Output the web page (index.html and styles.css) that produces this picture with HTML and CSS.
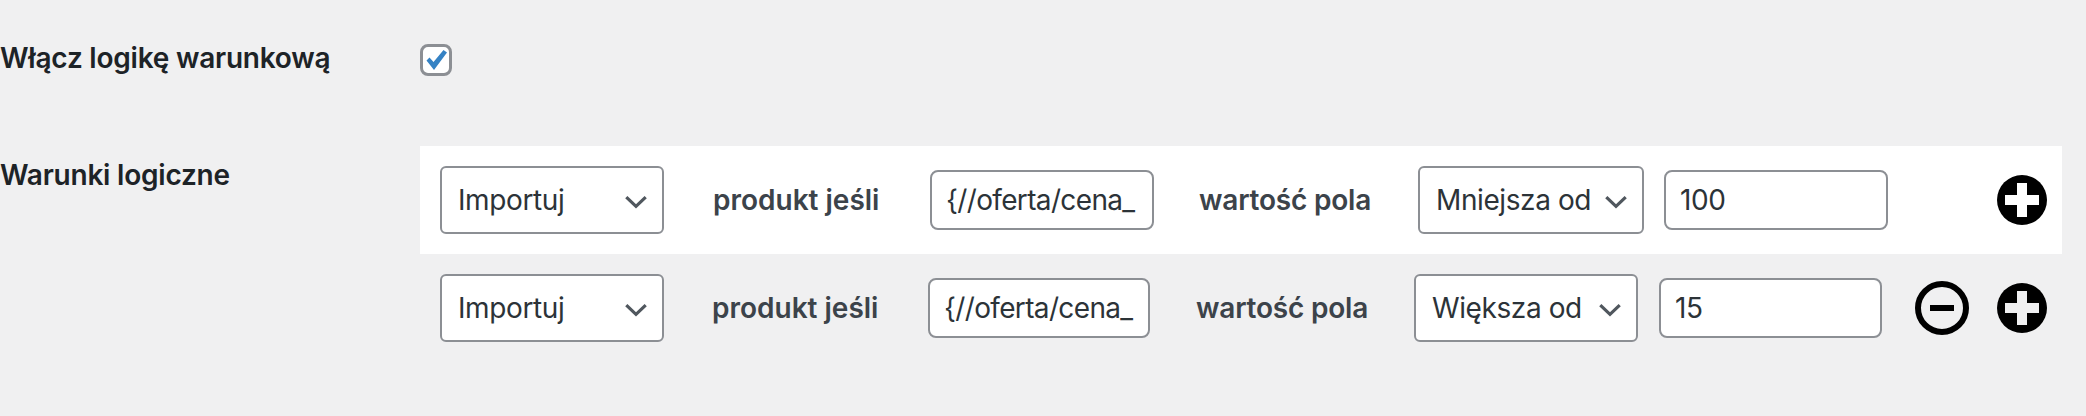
FILE: index.html
```html
<!DOCTYPE html>
<html lang="pl">
<head>
<meta charset="utf-8">
<title>Warunki logiczne</title>
<link rel="stylesheet" href="styles.css">
</head>
<body>
<div class="setting setting-enable">
  <div class="setting-label">Włącz logikę warunkową</div>
  <div class="checkbox">
    <svg viewBox="0 0 32 32" width="32" height="32"><path d="M6.5 16.5 L9.5 13.5 L13.5 18 L23.5 6 L27 8.5 L14 26 Z" fill="#3582c4"/></svg>
  </div>
</div>
<div class="setting">
  <div class="setting-label">Warunki logiczne</div>
  <div class="rules">
    <div class="rule rule-first">
      <div class="select select-action"><select><option>Importuj</option></select><svg class="chevron" viewBox="0 0 22 13"><path d="M2 2 L11 10.5 L20 2" fill="none" stroke="#50575e" stroke-width="3"/></svg></div>
      <span class="word word-product">produkt jeśli</span>
      <input class="field field-path" type="text" value="{//oferta/cena_">
      <span class="word word-value">wartość pola</span>
      <div class="select select-op"><select><option>Mniejsza od</option></select><svg class="chevron" viewBox="0 0 22 13"><path d="M2 2 L11 10.5 L20 2" fill="none" stroke="#50575e" stroke-width="3"/></svg></div>
      <input class="field field-num" type="text" value="100">
      <div class="actions">
        <svg class="plus" viewBox="0 0 50 50"><circle cx="25" cy="25" r="25"/><path d="M20 8 H30 V20 H42 V30 H30 V42 H20 V30 H8 V20 H20 Z" fill="#fff"/></svg>
      </div>
    </div>
    <div class="rule rule-second">
      <div class="select select-action"><select><option>Importuj</option></select><svg class="chevron" viewBox="0 0 22 13"><path d="M2 2 L11 10.5 L20 2" fill="none" stroke="#50575e" stroke-width="3"/></svg></div>
      <span class="word word-product">produkt jeśli</span>
      <input class="field field-path" type="text" value="{//oferta/cena_">
      <span class="word word-value">wartość pola</span>
      <div class="select select-op"><select><option>Większa od</option></select><svg class="chevron" viewBox="0 0 22 13"><path d="M2 2 L11 10.5 L20 2" fill="none" stroke="#50575e" stroke-width="3"/></svg></div>
      <input class="field field-num" type="text" value="15">
      <div class="actions">
        <svg class="minus" viewBox="0 0 54 54"><circle cx="27" cy="27" r="24" fill="none" stroke="#000" stroke-width="6"/><rect x="15" y="24" width="24" height="6"/></svg>
        <svg class="plus" viewBox="0 0 50 50"><circle cx="25" cy="25" r="25"/><path d="M20 8 H30 V20 H42 V30 H30 V42 H20 V30 H8 V20 H20 Z" fill="#f0f0f1"/></svg>
      </div>
    </div>
  </div>
</div>
</body>
</html>
```
FILE: styles.css
```css
* { box-sizing: border-box; }
html, body { margin: 0; }
body {
  width: 2086px;
  height: 416px;
  overflow: hidden;
  background: #f0f0f1;
  color: #1d2327;
  font-family: Inter, "Liberation Sans", sans-serif;
  font-size: 28px;
}
.setting { display: flex; align-items: flex-start; }
.setting-enable { padding-top: 44px; height: 146px; }
.setting-label {
  width: 420px;
  flex: none;
  font-weight: 600;
  line-height: 34px;
  letter-spacing: -0.22px;
}
.rules { width: 1642px; }
.setting:last-child > .setting-label { padding-top: 12px; }
.setting-enable .setting-label { margin-top: -3px; }
.checkbox {
  width: 32px;
  height: 32px;
  background: #fff;
  border: 3px solid #8c8f94;
  border-radius: 8px;
  display: flex;
  align-items: center;
  justify-content: center;
}
.checkbox svg { flex: none; }
.rule {
  display: flex;
  align-items: center;
  height: 108px;
  padding-left: 20px;
  color: #3c434a;
}
.rule-first { background: #fff; }
.select { position: relative; flex: none; height: 68px; }
.select select {
  appearance: none;
  display: block;
  width: 100%;
  height: 100%;
  padding: 0 0 0 16px;
  background: #fff;
  border: 2px solid #8c8f94;
  border-radius: 6px;
  color: #2c3338;
  font: 400 28px Inter, "Liberation Sans", sans-serif;
  letter-spacing: -0.4px;
}
.chevron {
  position: absolute;
  right: 16px;
  top: 29px;
  width: 24px;
  height: 14px;
}
.select-action { width: 224px; }
.select-op { width: 226px; }
.rule-second .select-op { width: 224px; }
.field {
  flex: none;
  height: 60px;
  padding: 0 0 0 14px;
  background: #fff;
  border: 2px solid #8c8f94;
  border-radius: 8px;
  color: #2c3338;
  font: 400 28px Inter, "Liberation Sans", sans-serif;
  letter-spacing: -0.4px;
}
.field-path { width: 224px; letter-spacing: -0.65px; }
.rule-second .field-path { width: 222px; }
.field-num { width: 224px; margin-left: 20px; }
.rule-second .field-num { width: 223px; margin-left: 21px; }
.word { flex: none; font-weight: 600; }
.word-product { width: 217px; margin-left: 49px; }
.word-value { width: 219px; margin-left: 45px; letter-spacing: -0.2px; }
.rule-second .word-product { width: 216px; margin-left: 48px; }
.rule-second .word-value { width: 218px; margin-left: 46px; }
.actions {
  margin-left: auto;
  margin-right: 15px;
  display: flex;
  align-items: center;
  gap: 28px;
}
.plus { width: 50px; height: 50px; display: block; }
.minus { width: 54px; height: 54px; display: block; }
```
